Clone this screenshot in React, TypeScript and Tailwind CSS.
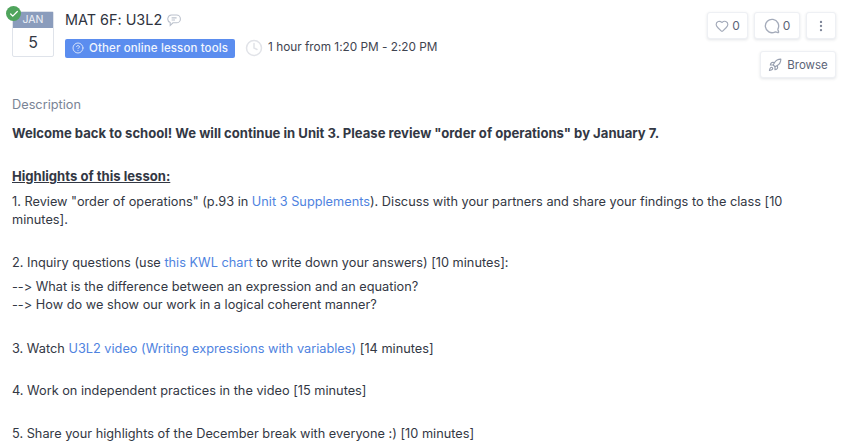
import { Heart, MessageCircle, MoreVertical, Rocket, Clock, HelpCircle, Check } from 'lucide-react';

function CountButton({ icon, count, width }: { icon: React.ReactNode; count: number; width: string }) {
    return (
        <div className={`${width} h-[27px] flex items-center justify-center gap-[3px] rounded-[3px] border border-[#eef0f4] bg-white shadow-[0_1px_3px_rgba(60,70,90,0.14)] text-[12px] text-[#5c6478]`}>
            {icon}
            <span>{count}</span>
        </div>
    );
}

function NoteBubble() {
    return (
        <svg width="14" height="13" viewBox="0 0 14 13" fill="none" stroke="#bcc2cd" strokeWidth="1.1">
            <path d="M4.5 1h5a3.9 3.9 0 0 1 0 7.8H6L3.2 11.4V8.5A3.9 3.9 0 0 1 4.5 1Z" />
            <path d="M4.6 3.9h5M4.6 6h3.4" />
        </svg>
    );
}

export default function App() {
    return (
        <div className="w-[843px] h-[447px] overflow-hidden bg-white text-[#333844] text-[12.75px] leading-[18px] font-['Inter',sans-serif] [font-variant-ligatures:none] [font-feature-settings:'calt'_0]">
            <div className="flex justify-between pl-[12px] pr-[7px] pt-[12px]">
                <div className="flex gap-[11px]">
                    <div className="relative -mt-[1px] w-[42px] h-[46px] flex flex-col rounded-[2px] border border-[#dfe3ea]">
                        <div className="h-[16px] bg-[#8a9cbc] text-[#eef1f7] text-[10.5px] leading-[16px] text-center">JAN</div>
                        <div className="flex-1 text-center text-[16px] leading-[29px] text-[#333844]">5</div>
                        <div className="absolute -left-[7px] -top-[6px] w-[15px] h-[15px] rounded-full bg-[#4fa45c] flex items-center justify-center">
                            <Check size={10} color="white" strokeWidth={3} />
                        </div>
                    </div>
                    <div>
                        <div className="flex items-center gap-[5px] text-[14.4px] leading-[16px] text-[#2f3340]">
                            MAT 6F: U3L2
                            <NoteBubble />
                        </div>
                        <div className="flex items-center mt-[10px]">
                            <div className="h-[19px] px-[7px] flex items-center gap-[5px] rounded-[2px] bg-[#5b8def] text-[#f2f6fe] text-[11.5px] font-medium tracking-[0.12px]">
                                <HelpCircle size={12} color="#d5e2fb" />
                                Other online lesson tools
                            </div>
                            <Clock size={18} color="#e1e3e8" className="ml-[10px] mb-[1px]" />
                            <span className="ml-[5px] mb-[2px] text-[11.8px] text-[#3f4450]">1 hour from 1:20 PM - 2:20 PM</span>
                        </div>
                    </div>
                </div>
                <div className="flex flex-col items-end gap-[12px]">
                    <div className="flex gap-[6px]">
                        <CountButton width="w-[41px]" icon={<Heart size={14} color="#a4abba" />} count={0} />
                        <CountButton width="w-[46px]" icon={<MessageCircle size={16} color="#a4abba" className="-scale-x-100" />} count={0} />
                        <div className="w-[30px] h-[27px] flex items-center justify-center rounded-[3px] border border-[#eef0f4] bg-white shadow-[0_1px_3px_rgba(60,70,90,0.14)]">
                            <MoreVertical size={14} color="#7f8799" />
                        </div>
                    </div>
                    <div className="w-[76px] h-[27px] flex items-center justify-center gap-[5px] rounded-[3px] border border-[#eef0f4] bg-white shadow-[0_1px_3px_rgba(60,70,90,0.14)] text-[11.5px] text-[#5c6478]">
                        <Rocket size={14} color="#98a0b0" />
                        Browse
                    </div>
                </div>
            </div>
            <div className="px-[12px] mt-[18px]">
                <div className="text-[#7a8496]">Description</div>
                <p className="mt-[10px] font-bold text-[13.1px]">Welcome back to school! We will continue in Unit 3. Please review "order of operations" by January 7.</p>
                <p className="mt-[25px] font-bold text-[13.1px] underline">Highlights of this lesson:</p>
                <p className="mt-[8px]">1. Review "order of operations" (p.93 in <span className="text-[#4f83e0]">Unit 3 Supplements</span>). Discuss with your partners and share your findings to the class [10 minutes].</p>
                <p className="mt-[25px]">2. Inquiry questions (use <span className="text-[#4f83e0]">this KWL chart</span> to write down your answers) [10 minutes]:</p>
                <p className="mt-[6px]">--&gt; What is the difference between an expression and an equation?<br />--&gt; How do we show our work in a logical coherent manner?</p>
                <p className="mt-[26px]">3. Watch <span className="text-[#4f83e0]">U3L2 video (Writing expressions with variables)</span> [14 minutes]</p>
                <p className="mt-[24px]">4. Work on independent practices in the video [15 minutes]</p>
                <p className="mt-[25px]">5. Share your highlights of the December break with everyone :) [10 minutes]</p>
            </div>
        </div>
    );
}
